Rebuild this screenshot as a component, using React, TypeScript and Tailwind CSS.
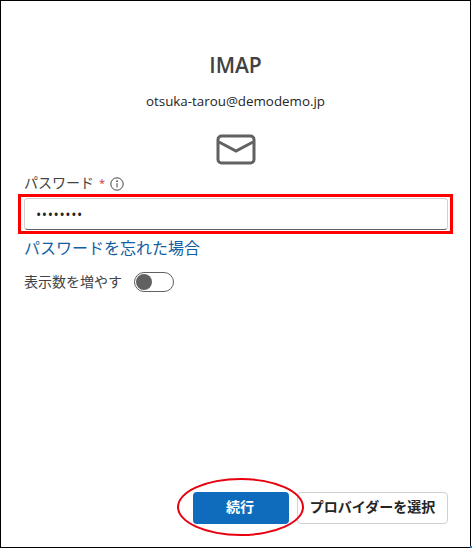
import { useState } from 'react'

const font = '[font-family:"Open_Sans","Noto_Sans_CJK_JP",sans-serif]'

function MailIcon() {
  return (
    <svg width="40" height="32" viewBox="0 0 40 32" fill="none" stroke="#616161" strokeWidth="3">
      <rect x="2" y="2" width="36" height="27" rx="3.5" />
      <path d="M3 8 L20 17 L37 8" />
    </svg>
  )
}

function InfoIcon() {
  return (
    <svg width="14" height="14" viewBox="0 0 14 14" fill="none" stroke="#424242">
      <circle cx="7" cy="7" r="6.2" />
      <path d="M7 6.2 V10.4" />
      <circle cx="7" cy="4.2" r="0.5" fill="#424242" />
    </svg>
  )
}

export default function App() {
  const [password] = useState('abcd1234')

  return (
    <div className={`relative h-[548px] w-[472px] overflow-hidden bg-white ${font}`}>
      <div className="mr-[1px] flex h-full flex-col border border-black px-[23px]">
        <h1 className="mt-[50px] text-center text-[21px] leading-[28px] font-semibold text-[#424242]">IMAP</h1>
        <p className="mt-[12px] text-center text-[13.35px] leading-[20px] text-[#242424]">otsuka-tarou@demodemo.jp</p>
        <div className="mt-[23px] flex justify-center">
          <MailIcon />
        </div>
        <label className="mt-[7px] flex items-center text-[14px] leading-[20px] text-[#424242]">
          パスワード
          <span className="ml-[5px] text-[11px] text-[#c4314b]">*</span>
          <span className="ml-[5px] flex pt-[1px]">
            <InfoIcon />
          </span>
        </label>
        <input
          type="password"
          readOnly
          value={password}
          className="mt-[5px] h-[32px] w-[424px] rounded border border-[#d1d1d1] border-b-[#616161] px-[11px] text-[14px] tracking-[0.6px] text-[#242424] outline-none"
        />
        <a className="mt-[6px] text-[16px] leading-[24px] text-[#115ea3]">パスワードを忘れた場合</a>
        <div className="mt-[12px] flex items-center gap-3">
          <span className="text-[14px] leading-[20px] text-[#424242]">表示数を増やす</span>
          <span className="flex h-[20px] w-[40px] items-center rounded-full border border-[#616161] px-[1px]">
            <span className="h-[16px] w-[16px] rounded-full bg-[#616161]" />
          </span>
        </div>
        <div className="mt-auto mr-[-1px] mb-[23px] flex justify-end gap-2">
          <button className="h-[32px] w-[96px] rounded bg-[#0f6cbd] pr-[2px] pb-[3px] text-[14px] font-semibold text-white">続行</button>
          <button className="h-[32px] w-[151px] rounded border border-[#d1d1d1] bg-white pb-[3px] text-[14px] font-semibold text-[#242424]">
            プロバイダーを選択
          </button>
        </div>
      </div>

      {/* red annotations on top of the screenshot */}
      <div className="absolute top-[194px] left-[18px] h-[40px] w-[435px] border-[3px] border-[#ff0000]" />
      <div className="absolute top-[478px] left-[177px] h-[58px] w-[127px] rounded-[50%] border-2 border-[#e8000f]" />
      <div className="absolute right-0 bottom-0 h-[2px] w-[2px] bg-[#2b7cd3]" />
    </div>
  )
}
